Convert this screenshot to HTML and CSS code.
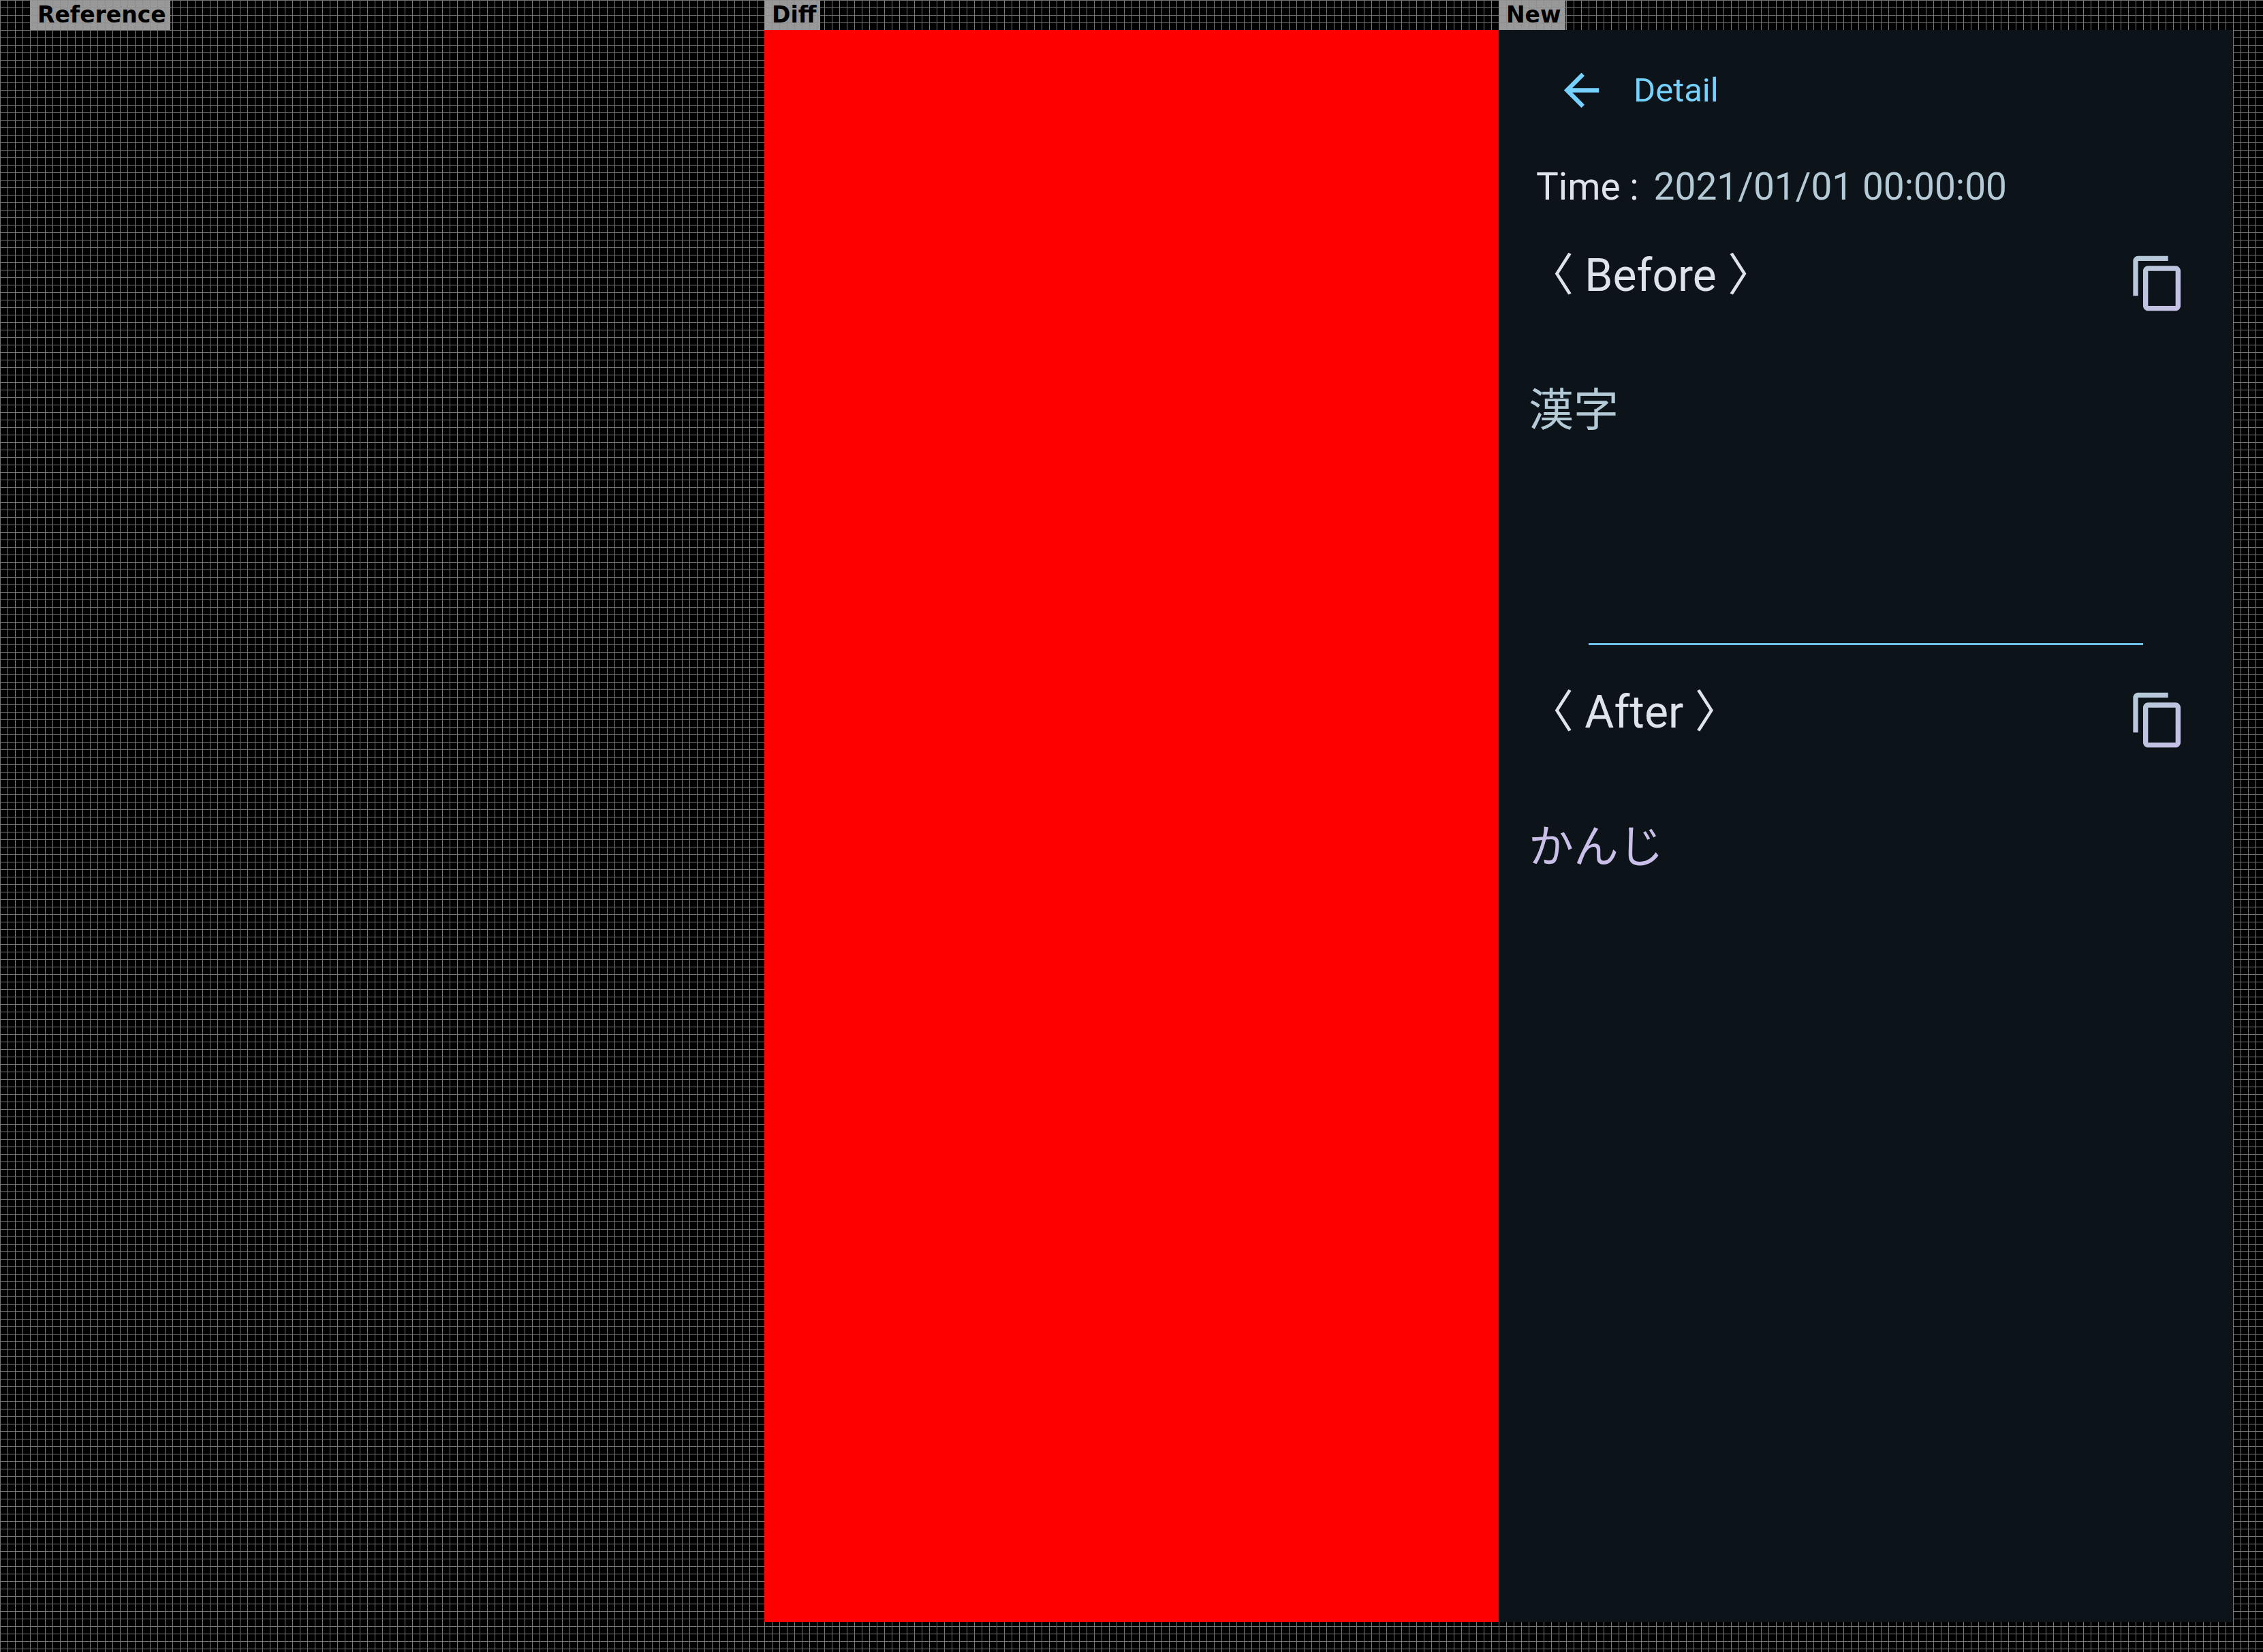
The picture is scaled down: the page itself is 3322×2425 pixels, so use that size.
FILE: index.html
```html
<!DOCTYPE html>
<html lang="en">
<head>
<meta charset="utf-8">
<title>Detail screen comparison</title>
<link rel="stylesheet" href="styles.css">
</head>
<body>
<svg class="defs" aria-hidden="true">
  <defs>
    <linearGradient id="copy-tint" gradientUnits="userSpaceOnUse" x1="2" y1="1" x2="21" y2="23">
      <stop offset="0" stop-color="#b4cad6"/>
      <stop offset="1" stop-color="#c6bfe6"/>
    </linearGradient>
    <symbol id="copy" viewBox="0 0 24 24">
      <path fill="url(#copy-tint)" d="M16 1H4c-1.100 0-2 .9-2 2v14h2V3h12V1zm3 4H8c-1.100 0-2 .9-2 2v14c0 1.100.9 2 2 2h11c1.100 0 2-.9 2-2V7c0-1.100-.9-2-2-2zm0 16H8V7h11v14z"/>
    </symbol>
  </defs>
</svg>
<main class="board">
  <section class="panel">
    <h2 class="label">Reference</h2>
    <div class="view"></div>
  </section>
  <section class="panel">
    <h2 class="label">Diff</h2>
    <div class="view view-diff"></div>
  </section>
  <section class="panel">
    <h2 class="label">New</h2>
    <div class="view screen">
      <header class="appbar">
        <button class="icon-button" type="button" aria-label="Back">
          <svg class="back-icon" viewBox="0 0 24 24"><path fill="currentColor" d="M20 11H7.830l5.590-5.590L12 4l-8 8 8 8 1.410-1.410L7.830 13H20v-2z"/></svg>
        </button>
        <h1 class="title">Detail</h1>
      </header>
      <p class="time"><span>Time :</span><time class="stamp" datetime="2021-01-01T00:00:00">2021/01/01 00:00:00</time></p>
      <div class="section-head">
        <h3 class="heading">〈 Before 〉</h3>
        <button class="icon-button" type="button" aria-label="Copy before"><svg class="copy-icon"><use href="#copy"/></svg></button>
      </div>
      <p class="entry entry-before" lang="ja">漢字</p>
      <hr class="divider">
      <div class="section-head">
        <h3 class="heading">〈 After 〉</h3>
        <button class="icon-button" type="button" aria-label="Copy after"><svg class="copy-icon"><use href="#copy"/></svg></button>
      </div>
      <p class="entry entry-after" lang="ja">かんじ</p>
    </div>
  </section>
</main>
</body>
</html>
```
FILE: styles.css
```css
* {
  box-sizing: border-box;
  margin: 0;
  padding: 0;
}

body {
  background-color: #000;
  background-image:
    linear-gradient(to right, #777 1px, transparent 1px),
    linear-gradient(to bottom, #777 1px, transparent 1px);
  background-size: 11px 11px;
  font-family: Roboto, "Noto Sans CJK JP", sans-serif;
}

.defs {
  position: absolute;
  width: 0;
  height: 0;
}

.board {
  display: grid;
  grid-template-columns: repeat(3, 1fr);
  min-height: 100vh;
  padding: 0 44px 44px;
}

.panel {
  display: flex;
  flex-direction: column;
  align-items: flex-start;
}

.label {
  padding: 0 6px 0 11px;
  background-color: #999;
  background-image:
    linear-gradient(to right, #8f8f8f 1px, transparent 1px),
    linear-gradient(to bottom, #8f8f8f 1px, transparent 1px);
  background-size: 11px 11px;
  color: #000;
  font: bold 33px/44px "DejaVu Sans", sans-serif;
}

.view {
  flex: 1;
  align-self: stretch;
}

.view-diff {
  background: #f00;
}

.screen {
  padding: 0 66px 44px 44px;
  background: #0c1319;
  color: #dfe3eb;
}

.icon-button {
  display: flex;
  border: 0;
  background: none;
  color: inherit;
}

.appbar {
  display: flex;
  align-items: center;
  gap: 38px;
  height: 177px;
  padding-left: 39px;
  color: #76d1ff;
}

.back-icon {
  width: 77px;
  height: 77px;
}

.title {
  font-size: 49px;
  font-weight: 400;
  line-height: 64px;
}

.time {
  display: flex;
  gap: 22px;
  padding: 21px 0 60px 11px;
  font-size: 55px;
  line-height: 64px;
}

.stamp {
  color: #b4cad6;
}

.section-head {
  display: flex;
  justify-content: space-between;
  align-items: flex-start;
}

.section-head .icon-button {
  padding: 6px 0 4px;
}

.heading {
  font-size: 66px;
  font-weight: 400;
  line-height: 78px;
}

.copy-icon {
  width: 88px;
  height: 88px;
}

.entry {
  min-height: 480px;
  padding-top: 100px;
  font-size: 66px;
  line-height: 78px;
}

.entry-before {
  color: #b4cad6;
}

.entry-after {
  color: #c9bfe8;
}

.divider {
  height: 3px;
  margin: 0 66px 60px 88px;
  border: 0;
  background: #6cc0ea;
}
```
